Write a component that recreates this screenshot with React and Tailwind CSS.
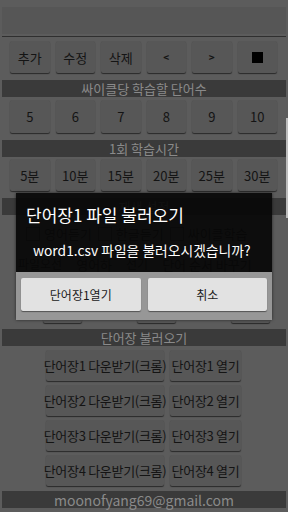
const kr = { fontFamily: '"Noto Sans CJK KR", "Noto Sans", sans-serif' }

function Btn({ children, className = '' }) {
  return (
    <div
      className={[
        'flex items-center justify-center whitespace-nowrap rounded-[2px] bg-[#575757] text-[13px] leading-none text-[#141414] shadow-[0_1px_1px_rgba(0,0,0,0.55)]',
        className,
      ].join(' ')}
    >
      {children}
    </div>
  )
}

function Bar({ children, className = '' }) {
  return (
    <div
      className={[
        'mx-[2px] flex h-[17px] items-center justify-center bg-[#3a3a3a] text-[13px] leading-none text-[#8a8a8a]',
        className,
      ].join(' ')}
    >
      {children}
    </div>
  )
}

const topRow = ['추가', '수정', '삭제', '<', '>', '■']
const counts = ['5', '6', '7', '8', '9', '10']
const minutes = ['5분', '10분', '15분', '20분', '25분', '30분']
const books = [1, 2, 3, 4]

export default function App() {
  return (
    <div className="relative h-[512px] w-[288px] overflow-hidden bg-[#5c5c5c]" style={kr}>
      <div className="pt-[7px]">
        <div className="mx-[2px] h-[27px] bg-[#565656]" />
        <div className="mx-[2px] mt-[2px] h-[1px] bg-[#2f2f2f]" />

        <div className="mt-[4px] grid grid-cols-6 gap-[6px] pl-[10px] pr-[11px]">
          {topRow.map((t) => (
            <Btn key={t} className="h-[32px]">
              {t === '■' ? (
                <span className="block h-[11px] w-[11px] bg-black" />
              ) : (
                <span className={t === '<' || t === '>' ? 'text-[10px] font-bold' : ''}>{t}</span>
              )}
            </Btn>
          ))}
        </div>

        <Bar className="mt-[7px]">싸이클당 학습할 단어수</Bar>

        <div className="mt-[3px] grid grid-cols-6 gap-[6px] pl-[10px] pr-[11px]">
          {counts.map((t) => (
            <Btn key={t} className={['h-[33px]', t === '5' ? 'text-[#7a1212]' : ''].join(' ')}>
              {t}
            </Btn>
          ))}
        </div>

        <Bar className="mt-[7px]">1회 학습시간</Bar>

        <div className="mt-[2px] grid grid-cols-6 gap-[6px] pl-[10px] pr-[11px]">
          {minutes.map((t) => (
            <Btn key={t} className="h-[32px]">
              {t}
            </Btn>
          ))}
        </div>

        <Bar className="mt-[7px]">재생 설정</Bar>

        <div className="mt-[6px] flex gap-[6px] px-[26px]">
          {['영어듣기', '한글듣기', '싸이클학습'].map((t) => (
            <div key={t} className="flex h-[26px] items-center gap-[4px] text-[13px] text-[#141414]">
              <span className="block h-[14px] w-[14px] border border-[#2a2a2a]" />
              {t}
            </div>
          ))}
        </div>

        <div className="mt-[5px] flex h-[24px] items-center gap-[8px] px-[18px] text-[12px] text-[#141414]">
          <span>파일오선</span>
          <Btn className="h-[22px] px-[6px]">영어하</Btn>
          <span>선기</span>
          <Btn className="h-[22px] px-[6px]">단어 순서 바꾸기</Btn>
        </div>

        <div className="mt-[33px] flex justify-between pl-[43px] pr-[18px]">
          {['a', 'b', 'c'].map((k) => (
            <Btn key={k} className="h-[14px] w-[39px]" />
          ))}
        </div>

        <Bar className="mt-[6px]">단어장 불러오기</Bar>

        <div className="mt-[4px] flex flex-col gap-[4px] pl-[46px]">
          {books.map((n) => (
            <div key={n} className="flex gap-[6px]">
              <Btn className="h-[31px] w-[118px] text-[10.5px] tracking-[-0.3px]">단어장{n} 다운받기(크롬)</Btn>
              <Btn
                className={[
                  'h-[31px] w-[71px] text-[10.5px] tracking-[-0.3px]',
                  n === 2 ? 'text-[#7a1212]' : '',
                ].join(' ')}
              >
                단어장{n} 열기
              </Btn>
            </div>
          ))}
        </div>

        <Bar className="mt-[5px] text-[14px]">moonofyang69@gmail.com</Bar>
      </div>

      <div className="absolute right-0 top-[118px] h-[100px] w-[2px] bg-[#bdbdbd]" />

      <div className="absolute left-[16px] top-[193px] w-[256px] shadow-[0_0_3px_rgba(0,0,0,0.6)]">
        <div className="h-[79px] bg-[rgba(8,8,8,0.93)] pl-[10px] pt-[12px] text-white">
          <div className="text-[17px] leading-[20px]">단어장1 파일 불러오기</div>
          <div className="mt-[16px] pl-[7px] text-[13.8px] leading-[18px]">word1.csv 파일을 불러오시겠습니까?</div>
        </div>
        <div className="flex h-[48px] gap-[7px] bg-[#979797] px-[5px] pt-[6px]">
          <div className="flex h-[33px] flex-1 items-center justify-center rounded-[2px] bg-[#e2e2e2] text-[12px] text-[#1a1a1a] shadow-[0_1px_1px_rgba(0,0,0,0.45)]">
            단어장1열기
          </div>
          <div className="flex h-[33px] flex-1 items-center justify-center rounded-[2px] bg-[#e2e2e2] text-[12px] text-[#1a1a1a] shadow-[0_1px_1px_rgba(0,0,0,0.45)]">
            취소
          </div>
        </div>
      </div>
    </div>
  )
}
